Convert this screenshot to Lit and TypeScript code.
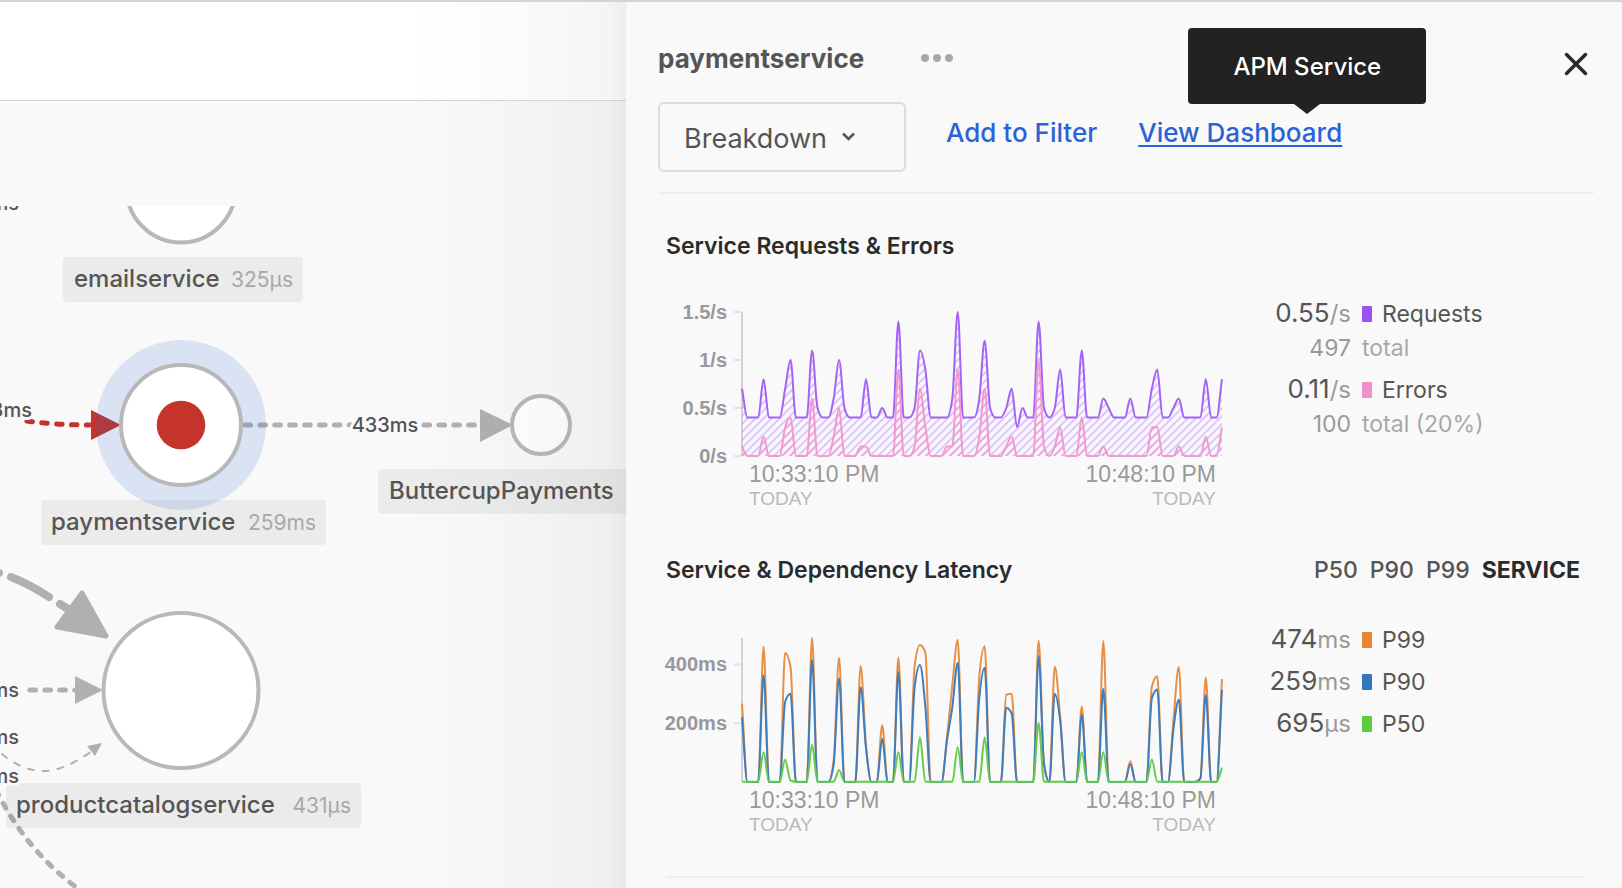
import { LitElement, html, svg, css } from "lit";
import { customElement, property } from "lit/decorators.js";

const SAMPLES = 90;
const PLOT_W = 480;
const PLOT_H = 144;

type Points = Record<number, number>;

/* Expands sparse samples over a resting value into a full series. */
const series = (base: number, points: Points): number[] =>
  Array.from({ length: SAMPLES }, (_, i) => points[i] ?? base);

const requests = series(4, {
  0: 7, 4: 8, 8: 7, 9: 10, 13: 11, 14: 5, 17: 6, 18: 10, 19: 5, 23: 8, 26: 5,
  29: 14, 32: 5, 33: 11, 34: 9, 39: 6, 40: 15, 44: 6, 45: 12, 46: 5, 49: 5,
  50: 7, 51: 3, 52: 5, 55: 14, 56: 5, 58: 5, 59: 9, 63: 11, 67: 6, 68: 5,
  72: 6, 76: 7, 77: 9, 80: 5, 81: 6, 86: 8, 89: 8,
});
const errors = series(0, {
  0: 1, 4: 2, 8: 3, 9: 4, 13: 6, 17: 2, 18: 5, 22: 1, 23: 1, 29: 9, 32: 1,
  33: 7, 34: 3, 38: 1, 39: 1, 40: 9, 44: 2, 45: 7, 49: 1, 50: 2, 55: 10,
  56: 1, 58: 1, 59: 3, 63: 4, 67: 1, 76: 3, 77: 3, 81: 1, 86: 2, 89: 3,
});
const p99 = series(0, {
  0: 267, 4: 460, 8: 440, 9: 392, 13: 490, 17: 75, 18: 423, 22: 395, 23: 120,
  26: 193, 29: 424, 32: 392, 33: 466, 34: 440, 38: 150, 39: 330, 40: 483,
  44: 358, 45: 462, 49: 297, 50: 300, 55: 481, 56: 65, 58: 392, 59: 222,
  63: 257, 67: 480, 72: 71, 76: 324, 77: 360, 80: 210, 81: 391, 85: 12,
  86: 356, 89: 350,
});
const p90 = series(0, {
  0: 221, 4: 363, 8: 273, 9: 300, 13: 416, 17: 60, 18: 353, 22: 322, 23: 115,
  26: 147, 29: 375, 32: 320, 33: 398, 34: 256, 38: 140, 39: 255, 40: 405,
  44: 285, 45: 389, 49: 253, 50: 234, 55: 429, 56: 60, 58: 300, 59: 210,
  63: 229, 67: 317, 72: 60, 76: 285, 77: 315, 80: 180, 81: 280, 85: 12,
  86: 296, 89: 313,
});
const p50 = series(1, {
  4: 101, 8: 76, 9: 5, 13: 126, 18: 41, 29: 101, 33: 151, 40: 118, 45: 151,
  55: 201, 63: 101, 67: 101, 76: 76, 89: 49,
});

/* Monotone cubic curve through evenly spaced samples. */
function curve(values: number[], max: number): string {
  const dx = PLOT_W / (values.length - 1);
  const y = values.map((v) => PLOT_H - (v / max) * PLOT_H);
  const slope = y.slice(1).map((v, i) => (v - y[i]) / dx);
  const tangent = y.map((_, i) => {
    if (i === 0) return slope[0];
    if (i === y.length - 1) return slope[i - 1];
    const a = slope[i - 1];
    const b = slope[i];
    if (a * b <= 0) return 0;
    return Math.sign(a) * Math.min(Math.abs(a), Math.abs(b), Math.abs(a + b) / 4) * 2;
  });
  let d = `M0,${y[0].toFixed(2)}`;
  for (let i = 1; i < y.length; i++) {
    const x0 = (i - 1) * dx;
    const x1 = i * dx;
    d += `C${(x0 + dx / 3).toFixed(2)},${(y[i - 1] + (tangent[i - 1] * dx) / 3).toFixed(2)} ${(x1 - dx / 3).toFixed(2)},${(y[i] - (tangent[i] * dx) / 3).toFixed(2)} ${x1.toFixed(2)},${y[i].toFixed(2)}`;
  }
  return d;
}

interface Line {
  tone: string;
  values: number[];
  hatch?: boolean;
}

const base = css`
  :host {
    font-family: Inter, "Liberation Sans", sans-serif;
    box-sizing: border-box;
  }
  * {
    box-sizing: border-box;
  }
`;

@customElement("service-map")
export class ServiceMap extends LitElement {
  static styles = [
    base,
    css`
      :host {
        display: flex;
        flex-direction: column;
        position: relative;
        min-width: 0;
        overflow: hidden;
        background: #f9f9f9;
      }
      :host::after {
        content: "";
        position: absolute;
        inset: 0 0 0 auto;
        width: 220px;
        background: linear-gradient(
          to right,
          rgba(0, 0, 0, 0),
          rgba(0, 0, 0, 0.012) 40%,
          rgba(0, 0, 0, 0.038) 92%,
          rgba(0, 0, 0, 0.065)
        );
        pointer-events: none;
      }
      .bar {
        flex: none;
        height: 99px;
        background: #fff;
        border-bottom: 1px solid #d8d8d8;
      }
      .viewport {
        flex: 1;
        min-height: 0;
        margin-top: 105px;
        overflow: hidden;
      }
      .graph {
        display: block;
        width: 100%;
        height: 100%;
      }
      .edge {
        fill: none;
        stroke: #b0b0b0;
        stroke-width: 5;
        stroke-linecap: round;
        stroke-dasharray: 5.6 9.3;
      }
      .edge.bad {
        stroke: #c4342b;
      }
      .edge.heavy {
        stroke-width: 8;
        stroke-dasharray: none;
      }
      .edge.light {
        stroke-width: 2;
        stroke-dasharray: 6 9;
      }
      .head {
        fill: #b0b0b0;
      }
      .head.round {
        stroke: #b0b0b0;
        stroke-width: 5;
        stroke-linejoin: round;
      }
      .head.bad {
        fill: #c4342b;
      }
      .node {
        fill: #fff;
        stroke: #b8b8b8;
        stroke-width: 4;
      }
      .halo {
        fill: #2a63d6;
        fill-opacity: 0.15;
      }
      .core {
        fill: #c4342b;
      }
      .tag {
        fill: #000;
        fill-opacity: 0.055;
      }
      .name {
        font-size: 24px;
        font-weight: 500;
        fill: #555;
      }
      .time {
        font-size: 21px;
        fill: #a8a8a8;
      }
      .delay {
        font-size: 20px;
        font-weight: 500;
        fill: #555;
        stroke: #f9f9f9;
        stroke-width: 6;
        stroke-linejoin: round;
        paint-order: stroke;
      }
    `,
  ];

  render() {
    return html`
      <div class="bar"></div>
      <div class="viewport">
        <svg class="graph" role="img" aria-label="Service map">
          <g transform="translate(0 -206)">
            <path class="edge heavy" d="M-12 570Q-6 571 -1 573M11 577Q31 585 49 597M60 604L76 614" />
            <path class="head round" d="M82 593L57 627L106 636Z" />
            <path class="edge" d="M30 690H76" />
            <path class="head" d="M75 676L103 690L75 704Z" />
            <path class="edge light" d="M2 754Q22 771 44 771Q64 771 92 751" />
            <path class="head" d="M87 746L102 743L95 756Z" />
            <path class="edge" d="M-4 790Q26 850 76 887L100 905" />
            <path class="edge bad" d="M27 421Q54 425 90 425" />
            <path class="head bad" d="M91 410L121 425L91 440Z" />
            <path class="edge" d="M245 425H352M424 425H480" />
            <path class="head" d="M480 409L513 425L480 442Z" />

            <rect class="tag" x="63" y="257" width="240" height="45" rx="4" />
            <text class="name" x="74" y="287">emailservice</text>
            <text class="time" x="293" y="287" text-anchor="end">325µs</text>
            <rect class="tag" x="41" y="500" width="285" height="45" rx="4" />
            <text class="name" x="51" y="530">paymentservice</text>
            <text class="time" x="316" y="530" text-anchor="end">259ms</text>
            <rect class="tag" x="6" y="783" width="355" height="45" rx="4" />
            <text class="name" x="16" y="813">productcatalogservice</text>
            <text class="time" x="351" y="813" text-anchor="end">431µs</text>
            <rect class="tag" x="378" y="469" width="300" height="45" rx="4" />
            <text class="name" x="389" y="499">ButtercupPayments</text>

            <text class="delay" x="32" y="417" text-anchor="end">348ms</text>
            <text class="delay" x="385" y="432" text-anchor="middle">433ms</text>
            <text class="delay" x="19" y="210" text-anchor="end">2ms</text>
            <text class="delay" x="19" y="697" text-anchor="end">14ms</text>
            <text class="delay" x="19" y="744" text-anchor="end">12ms</text>
            <text class="delay" x="19" y="783" text-anchor="end">16ms</text>

            <circle class="halo" cx="181" cy="425" r="85" />
            <circle class="node" cx="181" cy="188" r="54.5" />
            <circle class="node" cx="181" cy="425" r="60" />
            <circle class="core" cx="181" cy="425" r="24.3" />
            <circle class="node" cx="181" cy="690.5" r="77.5" />
            <circle class="node" cx="541" cy="425" r="29" />
          </g>
        </svg>
      </div>
    `;
  }
}

@customElement("time-chart")
export class TimeChart extends LitElement {
  @property({ attribute: false }) lines: Line[] = [];
  @property({ type: Number }) max = 1;
  @property({ attribute: false }) ticks: { at: number; text: string }[] = [];
  @property() label = "";

  static styles = [
    base,
    css`
      :host {
        display: grid;
        grid-template-columns: 61px minmax(0, 1fr);
        column-gap: 7px;
        font-family: "Liberation Sans", Arial, sans-serif;
      }
      .ticks {
        position: relative;
        height: 144px;
        margin-top: 16px;
      }
      .tick {
        position: absolute;
        right: 0;
        font-size: 20px;
        font-weight: 700;
        line-height: 24px;
        color: #97979f;
        transform: translateY(-50%);
        white-space: nowrap;
      }
      .plot {
        padding-top: 16px;
        min-width: 0;
      }
      .canvas {
        display: grid;
        grid-template-columns: 8px minmax(0, 1fr);
        height: 144px;
      }
      .marks,
      .lines {
        display: block;
        width: 100%;
        height: 144px;
        overflow: visible;
      }
      .mark {
        stroke: #e2e2e2;
        stroke-width: 2;
      }
      .axis {
        stroke: #d2d2d2;
        stroke-width: 2;
      }
      .line {
        fill: none;
        stroke-width: 2;
        stroke-linejoin: round;
        vector-effect: non-scaling-stroke;
      }
      .purple { stroke: #a463f6; }
      .pink { stroke: #f09ad0; }
      .orange { stroke: #e68f45; }
      .blue { stroke: #3f7dbd; }
      .green { stroke: #63cc4a; }
      .hatch { stroke-width: 2; stroke-opacity: 0.32; }
      .pink.hatch { stroke-opacity: 0.6; }
      .dates {
        display: flex;
        justify-content: space-between;
        margin-top: 6px;
        padding: 0 6px 0 15px;
      }
      .stamp {
        font-size: 23px;
        line-height: 24px;
        color: #999;
      }
      .stamp:last-child {
        text-align: right;
      }
      .day {
        display: block;
        font-size: 19px;
        line-height: 26px;
        color: #b9b9b9;
      }
    `,
  ];

  render() {
    const y = (v: number) => PLOT_H - (v / this.max) * PLOT_H;
    return html`
      <div class="ticks">
        ${this.ticks.map((t) => html`<span class="tick" style="top:${Math.round(y(t.at))}px">${t.text}</span>`)}
      </div>
      <div class="plot">
        <div class="canvas">
          <svg class="marks" aria-hidden="true">
            ${this.ticks.map((t) => svg`<path class="mark" d=${`M0 ${y(t.at)}H8`} />`)}
            <path class="axis" d=${`M8 0V${PLOT_H}`} />
          </svg>
          <svg class="lines" viewBox="0 0 ${PLOT_W} ${PLOT_H}" preserveAspectRatio="none" role="img" aria-label=${this.label}>
            <defs>
              ${this.lines.map((l) => svg`
                <pattern id=${`hatch-${l.tone}`} width="8" height="8" patternUnits="userSpaceOnUse">
                  <path class=${`hatch ${l.tone}`} d="M-2 2L2 -2M-2 10L10 -2M6 10L10 6" />
                </pattern>`)}
            </defs>
            ${this.lines.map((l) =>
              l.hatch
                ? svg`<path fill=${`url(#hatch-${l.tone})`} d=${`${curve(l.values, this.max)}V${PLOT_H}H0Z`} />`
                : null
            )}
            ${this.lines.map((l) => svg`<path class=${`line ${l.tone}`} d=${curve(l.values, this.max)} />`)}
          </svg>
        </div>
        <div class="dates">
          <time class="stamp">10:33:10 PM<span class="day">TODAY</span></time>
          <time class="stamp">10:48:10 PM<span class="day">TODAY</span></time>
        </div>
      </div>
    `;
  }
}

@customElement("service-panel")
export class ServicePanel extends LitElement {
  static styles = [
    base,
    css`
      :host {
        display: block;
        min-width: 0;
        padding: 40px 28px 0 32px;
        background: #f9f9f9;
        overflow: hidden;
        color: #555;
      }
      button {
        font: inherit;
        color: inherit;
        background: none;
        border: 0;
        padding: 0;
        cursor: pointer;
      }
      .title-row {
        display: flex;
        align-items: flex-start;
        height: 44px;
      }
      .title {
        margin: 0;
        font-size: 26px;
        font-weight: 700;
        line-height: 34px;
      }
      .more {
        display: flex;
        align-items: center;
        height: 32px;
        margin-left: 57px;
      }
      .more-icon {
        display: block;
        width: 32px;
        height: 8px;
        fill: #a8a8a8;
      }
      .close {
        display: grid;
        place-items: center;
        width: 36px;
        height: 44px;
        margin-left: auto;
      }
      .close-icon {
        width: 24px;
        height: 24px;
        stroke: #2b2b2b;
        stroke-width: 3.5;
        stroke-linecap: round;
      }
      .actions {
        display: flex;
        align-items: flex-start;
        height: 92px;
        margin-top: 16px;
        border-bottom: 2px solid #efefef;
      }
      .picker {
        position: relative;
        width: 248px;
        margin-right: 40px;
      }
      .select {
        display: block;
        width: 100%;
        height: 70px;
        padding: 3px 24px 0;
        appearance: none;
        border: 2px solid #dcdcdc;
        border-radius: 6px;
        background: transparent;
        font: 27px/32px Inter, "Liberation Sans", sans-serif;
        color: #555;
      }
      .chevron {
        position: absolute;
        left: 184px;
        top: 30px;
        width: 13px;
        height: 9px;
        fill: none;
        stroke: #555;
        stroke-width: 2.5;
        pointer-events: none;
      }
      .link {
        position: relative;
        margin-right: 41px;
        font-size: 26px;
        font-weight: 500;
        line-height: 62px;
        color: #2a63d6;
        text-decoration: none;
        white-space: nowrap;
      }
      .link.active {
        text-decoration: underline;
        text-decoration-thickness: 2px;
        text-underline-offset: 3px;
      }
      .tip {
        position: absolute;
        left: 50px;
        bottom: 60px;
        width: 238px;
        padding-top: 2px;
        border-radius: 4px;
        background: #222;
        color: #fff;
        font-size: 24px;
        line-height: 74px;
        text-align: center;
      }
      .tip::after {
        content: "";
        position: absolute;
        left: 50%;
        top: 100%;
        border: 13px solid transparent;
        border-top: 10px solid #222;
        border-bottom: 0;
        transform: translateX(-50%);
      }
      .section {
        margin: 35px 8px 0;
      }
      .section + .section {
        margin-top: 41px;
      }
      .section-head {
        display: flex;
        justify-content: space-between;
        align-items: center;
        margin-bottom: 33px;
        padding-right: 6px;
      }
      .section + .section .section-head {
        margin-bottom: 35px;
      }
      .section-title {
        margin: 0;
        font-size: 23px;
        font-weight: 600;
        line-height: 34px;
        color: #2b2b2b;
      }
      .modes {
        display: flex;
        gap: 12px;
      }
      .mode {
        font-size: 23px;
        font-weight: 500;
        line-height: 34px;
      }
      .mode.on {
        font-weight: 700;
        color: #2b2b2b;
      }
      .body {
        display: grid;
        grid-template-columns: minmax(0, 139fr) minmax(0, 91fr);
      }
      .legend {
        display: flex;
        flex-direction: column;
        gap: 7px;
        margin: 0;
        padding: 0;
        list-style: none;
      }
      .row {
        display: grid;
        grid-template-columns: 129px minmax(0, 1fr);
        column-gap: 11px;
        align-items: baseline;
        height: 35px;
        line-height: 34px;
        white-space: nowrap;
      }
      .row + .row {
        height: 34px;
      }
      .value {
        text-align: right;
        font-size: 26px;
      }
      .unit {
        font-size: 24px;
        color: #999;
      }
      .key {
        display: flex;
        align-items: baseline;
        gap: 10px;
        font-size: 23px;
      }
      .swatch {
        width: 10px;
        height: 16px;
        border-radius: 1px;
      }
      .count {
        text-align: right;
        font-size: 23px;
        color: #999;
      }
      .note {
        font-size: 23px;
        color: #a8a8a8;
      }
      .requests { background: #9c50f6; }
      .errors { background: #ef92cb; }
      .p99 { background: #e68532; }
      .p90 { background: #3476be; }
      .p50 { background: #5ccb3c; }
      .rule {
        height: 2px;
        margin: 38px 8px 0;
        border: 0;
        background: #efefef;
      }
    `,
  ];

  private entry(value: string, unit: string, tone: string, name: string) {
    return html`
      <div class="row">
        <span class="value">${value}<span class="unit">${unit}</span></span>
        <span class="key"><i class="swatch ${tone}"></i>${name}</span>
      </div>`;
  }

  private total(count: string, note: string) {
    return html`
      <div class="row">
        <span class="count">${count}</span><span class="note">${note}</span>
      </div>`;
  }

  render() {
    return html`
      <header>
        <div class="title-row">
          <h1 class="title">paymentservice</h1>
          <button class="more" aria-label="More actions">
            <svg class="more-icon" viewBox="0 0 32 8"><circle cx="4" cy="4" r="4" /><circle cx="16" cy="4" r="4" /><circle cx="28" cy="4" r="4" /></svg>
          </button>
          <button class="close" aria-label="Close">
            <svg class="close-icon" viewBox="0 0 24 24"><path d="M2.5 2.5L21.5 21.5M21.5 2.5L2.5 21.5" /></svg>
          </button>
        </div>
        <div class="actions">
          <div class="picker">
            <select class="select" aria-label="Breakdown"><option>Breakdown</option></select>
            <svg class="chevron" viewBox="0 0 13 9" aria-hidden="true"><path d="M1 1.5L6.5 7L12 1.5" /></svg>
          </div>
          <a class="link" href="#filter">Add to Filter</a>
          <a class="link active" href="#dashboard" aria-describedby="tip">View Dashboard<span class="tip" id="tip" role="tooltip">APM Service</span></a>
        </div>
      </header>

      <section class="section">
        <div class="section-head"><h2 class="section-title">Service Requests &amp; Errors</h2></div>
        <div class="body">
          <time-chart
            label="Service requests and errors"
            .max=${15}
            .ticks=${[
              { at: 15, text: "1.5/s" },
              { at: 10, text: "1/s" },
              { at: 5, text: "0.5/s" },
              { at: 0, text: "0/s" },
            ]}
            .lines=${[
              { tone: "purple", values: requests, hatch: true },
              { tone: "pink", values: errors, hatch: true },
            ]}
          ></time-chart>
          <ul class="legend">
            <li>${this.entry("0.55", "/s", "requests", "Requests")}${this.total("497", "total")}</li>
            <li>${this.entry("0.11", "/s", "errors", "Errors")}${this.total("100", "total (20%)")}</li>
          </ul>
        </div>
      </section>

      <section class="section">
        <div class="section-head">
          <h2 class="section-title">Service &amp; Dependency Latency</h2>
          <div class="modes">
            <button class="mode">P50</button>
            <button class="mode">P90</button>
            <button class="mode">P99</button>
            <button class="mode on">SERVICE</button>
          </div>
        </div>
        <div class="body">
          <time-chart
            label="Service and dependency latency"
            .max=${490}
            .ticks=${[
              { at: 400, text: "400ms" },
              { at: 200, text: "200ms" },
            ]}
            .lines=${[
              { tone: "orange", values: p99 },
              { tone: "blue", values: p90 },
              { tone: "green", values: p50 },
            ]}
          ></time-chart>
          <ul class="legend">
            <li>${this.entry("474", "ms", "p99", "P99")}</li>
            <li>${this.entry("259", "ms", "p90", "P90")}</li>
            <li>${this.entry("695", "µs", "p50", "P50")}</li>
          </ul>
        </div>
      </section>
      <hr class="rule" />
    `;
  }
}

@customElement("app-root")
export class AppRoot extends LitElement {
  static styles = [
    base,
    css`
      :host {
        display: grid;
        grid-template-columns: minmax(0, 22fr) minmax(0, 35fr);
        grid-template-rows: minmax(0, 1fr);
        height: 100vh;
        overflow: hidden;
        border-top: 2px solid #d4d4d4;
        background: #f9f9f9;
      }
    `,
  ];

  render() {
    return html`<service-map></service-map><service-panel></service-panel>`;
  }
}
